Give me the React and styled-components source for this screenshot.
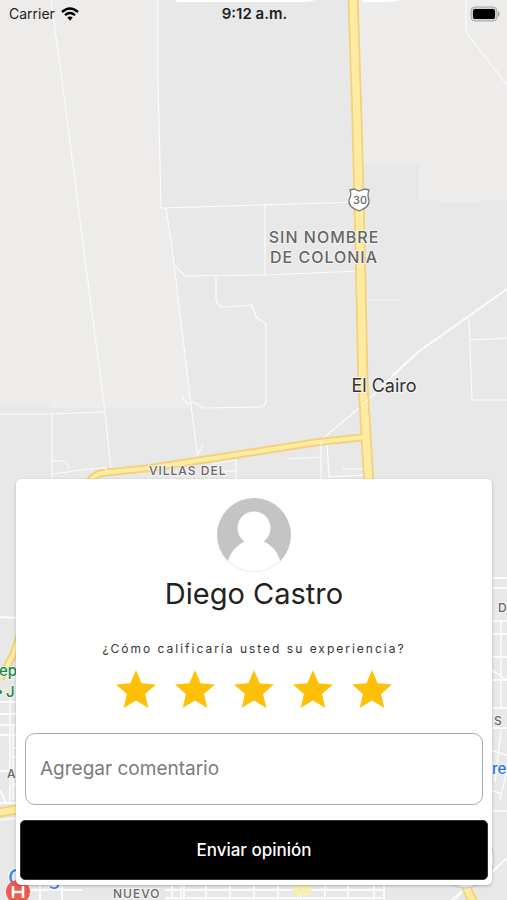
import React, { useState } from 'react'
import styled, { createGlobalStyle } from 'styled-components'

const theme = {
  primary: '#000',
  star: '#ffc107',
  land: '#e8e8e8',
  field: '#edecea',
  street: '#fbfbfb',
  font: 'Inter, Roboto, "Liberation Sans", sans-serif'
}

const GlobalStyle = createGlobalStyle`
  * {
    box-sizing: border-box;
  }

  body {
    margin: 0;
    background: ${theme.land};
    font-family: ${theme.font};
  }
`;

const Screen = styled.div`
    position: relative;
    display: flex;
    flex-direction: column;
    justify-content: space-between;
    min-height: 100vh;
    padding-bottom: 15px;
    overflow: hidden;
`;

const MapCanvas = styled.svg`
    position: absolute;
    inset: 0;
    width: 100%;
    height: 100%;
`;

const StatusBar = styled.header`
    position: relative;
    display: grid;
    grid-template-columns: 1fr auto 1fr;
    align-items: center;
    height: 27px;
    padding: 0 7px 0 9px;
    color: #222;
    font-size: 14px;
`;

const Carrier = styled.div`
    display: flex;
    align-items: center;
    gap: 6px;
`;

const Clock = styled.time`
    font-size: 15px;
    font-weight: 600;
`;

const Battery = styled.svg`
    justify-self: end;
`;

const Card = styled.main`
    position: relative;
    margin: 0 15px 0 16px;
    padding: 19px 4px 5px;
    background: #fff;
    border-radius: 5px;
    box-shadow: 0 1px 3px rgba(0, 0, 0, .25);
    display: flex;
    flex-direction: column;
    align-items: center;
`;

const Name = styled.h1`
    margin: 4px 0 0;
    font-size: 29px;
    line-height: 36px;
    font-weight: 400;
    color: #222;
`;

const Question = styled.p`
    margin: 28px 0 12px;
    font-size: 12px;
    line-height: 18px;
    letter-spacing: 2px;
    color: #333;
`;

const Stars = styled.div`
    display: flex;
    gap: 19px;
`;

const StarButton = styled.button`
    display: flex;
    padding: 0;
    border: 0;
    background: none;
    color: ${props => props.$active ? theme.star : '#ddd'};
    cursor: pointer;
`;

const Form = styled.form`
    align-self: stretch;
    display: flex;
    flex-direction: column;
    gap: 15px;
    margin-top: 25px;
`;

const CommentInput = styled.input`
    height: 72px;
    margin: 0 5px;
    padding: 0 14px 2px;
    border: 1px solid #aaa;
    border-radius: 10px;
    background: #fff;
    color: #222;
    font-family: inherit;
    font-size: 19px;

    &::placeholder {
      color: #7b7b7b;
      opacity: 1;
    }
`;

const SubmitButton = styled.button`
    height: 60px;
    border: 1px solid #333;
    border-radius: 5px;
    background: ${theme.primary};
    color: #fff;
    font-family: inherit;
    font-size: 17px;
    font-weight: 500;
`;

const Label = styled.text`
    font-family: ${theme.font};
    font-size: ${props => props.$size || 12}px;
    font-weight: ${props => props.$weight || 500};
    letter-spacing: ${props => props.$spacing || 0}px;
    text-anchor: ${props => props.$anchor || 'start'};
    fill: ${props => props.$color || '#666'};
    stroke: ${props => props.$halo || '#f4f4f4'};
    stroke-width: 2px;
    stroke-linejoin: round;
    paint-order: stroke;
`;

const highway = 'M353 -4 L357 120 L360 240 L363 385 L369 485'
const avenue = 'M88 486 Q90 476 102 473 L150 468 L254 452 L318 442 L366 437'

function Road({ d, width = 8 }) {
  return (
    <g fill="none" strokeLinejoin="round">
      <path d={d} stroke="#f4d27c" strokeWidth={width + 2} />
      <path d={d} stroke="#ffeca2" strokeWidth={width - 2} />
    </g>
  )
}

function CityMap() {
  return (
    <MapCanvas viewBox="0 0 507 900" preserveAspectRatio="xMidYMid slice" aria-hidden="true">
      <rect width="507" height="900" fill={theme.land} />
      <path d="M0 0H158L160 207H166L191 408H50V404H0Z" fill={theme.field} />
      <path d="M358 0H507V200H419V164H362Z" fill={theme.field} />

      {/* rural roads */}
      <g fill="none" stroke={theme.street} strokeWidth="1.2" strokeLinejoin="round">
        <path d="M51 0L62 80L82 236L105 412L111 470" />
        <path d="M158 0L158 80L161 208L360 202" />
        <path d="M166 208L171 240L182 330L191 405L198 458" />
        <path d="M174 265L185 276L265 275L360 271M265 206V275" />
        <path d="M216 277V299Q217 308 225 307L252 305L256 317L266 324V402Q264 407 260 407L203 408L194 402L188 404L181 396" />
        <path d="M0 414H52L105 412M52 414V480M52 461H62Q68 462 69 468M52 474L88 469L108 468" />
        <path d="M198 454L203 445M212 464L236 460V480M218 471H236" />
        <path d="M466 0V32L507 85" />
        <path d="M366 300H400M440 201H480" strokeWidth="0.6" />
        <path d="M469 319L472 400H507M470 340L507 338" />
        <path d="M507 289L418 352L365 403L321 440V479" />
        <path d="M507 289L418 352L392 376" strokeWidth="2" />
        <path d="M327 443L329 477L365 475M287 459L320 457M342 469H364" />
      </g>
      <path d="M175 0H315Q310 2 300 2H180Q176 2 175 0M362 0H400Q395 2 388 2H364Z" fill="#fff" />

      {/* left streets */}
      <g fill="none" stroke={theme.street} strokeWidth="2">
        <path d="M0 617L18 618M0 702H18M0 714H18M0 725H18M0 735H18M0 771H9M0 803H18" />
        <path d="M10 695V803M13 725V800M0 820L18 818M13 748H20M13 757H20M13 784H20" strokeWidth="1.5" />
        <path d="M0 790L6 803" />
      </g>

      {/* right streets */}
      <g fill="none" stroke={theme.street} strokeWidth="2">
        <path d="M490 578H507M490 588H507M490 621H507M490 634H507M490 657H507M490 680H507M490 708H507M490 728H507" />
        <path d="M501 621V708M490 669L507 680M490 750L507 755M501 730L495 782M490 768L507 772M490 790L502 794M507 770L500 800M490 811H507" strokeWidth="1.5" />
        <path d="M490 874L507 858" />
      </g>
      <Road d="M20 635L13 655L0 679" width={6} />
      <Road d="M-4 813L20 809" width={8} />

      {/* streets under the card */}
      <g fill="none" stroke={theme.street} strokeWidth="2">
        <path d="M30 890H82M40 882V900M62 882V900M165 890H383M172 882V900M181 882V900M184 882V900M206 882V900M230 882V900M254 882V900M278 882V900M301 882V900M325 882V900M348 882V900M374 882V900M384 882V900M165 898H383" />
        <path d="M450 902Q463 892 468 884" strokeWidth="3" />
      </g>
      <rect x="293" y="884" width="18" height="11" fill="#f7eeb0" />
      <Road d="M463 880L474 904" width={8} />
      <circle cx="465" cy="859" r="29" fill="#f4f4f4" stroke="#c8c8c8" />

      <Road d={highway} width={9} />
      <Road d={avenue} width={6} />
      <path d={highway} fill="none" stroke="#ffeca2" strokeWidth="7" />
      <path d="M103 467L108 472M321 440V445M362 405L368 400" stroke="#fff" strokeWidth="1" />

      <path d="M350 190L354 189L359 191L365 189L369 190Q367 195 369 200Q370 207 359 211Q348 207 349 200Q352 195 350 190Z" fill="#fff" stroke="#777" strokeWidth="1.3" />
      <Label x="360" y="204" $size={11} $anchor="middle" $halo="none">30</Label>

      <Label x="324" y="243" $size={16} $spacing={1} $anchor="middle">SIN NOMBRE</Label>
      <Label x="324" y="263" $size={16} $spacing={1} $anchor="middle">DE COLONIA</Label>
      <Label x="384" y="392" $size={18} $weight={400} $anchor="middle" $color="#333">El Cairo</Label>
      <Label x="149" y="475" $spacing={1}>VILLAS DEL</Label>
      <Label x="-1" y="676" $size={15} $color="#198a43">epo</Label>
      <circle cx="0" cy="692" r="2" fill="#198a43" />
      <Label x="6" y="697" $size={15} $color="#198a43">J</Label>
      <Label x="7" y="778">A</Label>
      <Label x="498" y="612">D</Label>
      <Label x="494" y="725">S</Label>
      <Label x="492" y="774" $size={15} $color="#1a73e8">re</Label>
      <Label x="113" y="898" $spacing={1}>NUEVO</Label>

      <Label x="8" y="885" $size={22} $color="#4285f4" $halo="#fff">G</Label>
      <Label x="48" y="885" $size={20} $color="#4285f4" $halo="#fff">g</Label>
      <circle cx="18" cy="892" r="12" fill="#ee5a52" />
      <path d="M13 886V898M23 886V898M13 892H23" stroke="#fff" strokeWidth="2.6" />
    </MapCanvas>
  )
}

function WifiIcon() {
  return (
    <svg width="18" height="14" viewBox="0 0 18 14" fill="none" stroke="#000" strokeWidth="2.4" aria-hidden="true">
      <path d="M1 5Q9 -2 17 5" />
      <path d="M4 8.2Q9 4 14 8.2" />
      <path d="M6.3 10.6Q9 8.6 11.7 10.6L9 13.8Z" fill="#000" stroke="none" />
    </svg>
  )
}

function Avatar() {
  return (
    <svg width="74" height="74" viewBox="0 0 74 74" role="img" aria-label="Diego Castro">
      <clipPath id="avatar">
        <circle cx="37" cy="37" r="37" />
      </clipPath>
      <g clipPath="url(#avatar)">
        <rect width="74" height="74" fill="#c4c4c4" />
        <circle cx="37" cy="30" r="16.5" fill="#fff" />
        <path d="M28 43L46 43Q59 49 63 62L64 74H10L11 62Q16 49 28 43Z" fill="#fff" />
      </g>
      <path d="M11 63A36.5 36.5 0 0 0 63 63" fill="none" stroke="#eee" />
    </svg>
  )
}

function Rating() {
  const [rating, setRating] = useState(5)

  return (
    <Stars>
      {[1, 2, 3, 4, 5].map(value => (
        <StarButton
          key={value}
          type="button"
          aria-label={`${value} de 5`}
          aria-pressed={rating === value}
          $active={value <= rating}
          onClick={() => setRating(value)}
        >
          <svg width="40" height="38" viewBox="2 2 20 19" fill="currentColor">
            <path d="M12 17.27L18.18 21l-1.64-7.03L22 9.24l-7.19-.61L12 2 9.19 8.63 2 9.24l5.46 4.73L5.82 21z" />
          </svg>
        </StarButton>
      ))}
    </Stars>
  )
}

function App() {
  const [comment, setComment] = useState('')

  return (
    <Screen>
      <GlobalStyle />
      <CityMap />
      <StatusBar>
        <Carrier>
          Carrier
          <WifiIcon />
        </Carrier>
        <Clock>9:12 a.m.</Clock>
        <Battery width="30" height="16" viewBox="0 0 30 16" aria-hidden="true">
          <rect x="1" y="1" width="26" height="14" rx="4" fill="#d2d2d2" stroke="#aaa" />
          <rect x="3" y="3" width="22" height="10" rx="2" fill="#000" />
          <path d="M28 5Q31 8 28 11Z" fill="#999" />
        </Battery>
      </StatusBar>
      <Card>
        <Avatar />
        <Name>Diego Castro</Name>
        <Question>¿Cómo calificaría usted su experiencia?</Question>
        <Rating />
        <Form onSubmit={e => e.preventDefault()}>
          <CommentInput
            aria-label="Agregar comentario"
            placeholder="Agregar comentario"
            value={comment}
            onChange={e => setComment(e.target.value)}
          />
          <SubmitButton type="submit">Enviar opinión</SubmitButton>
        </Form>
      </Card>
    </Screen>
  )
}

export default App
